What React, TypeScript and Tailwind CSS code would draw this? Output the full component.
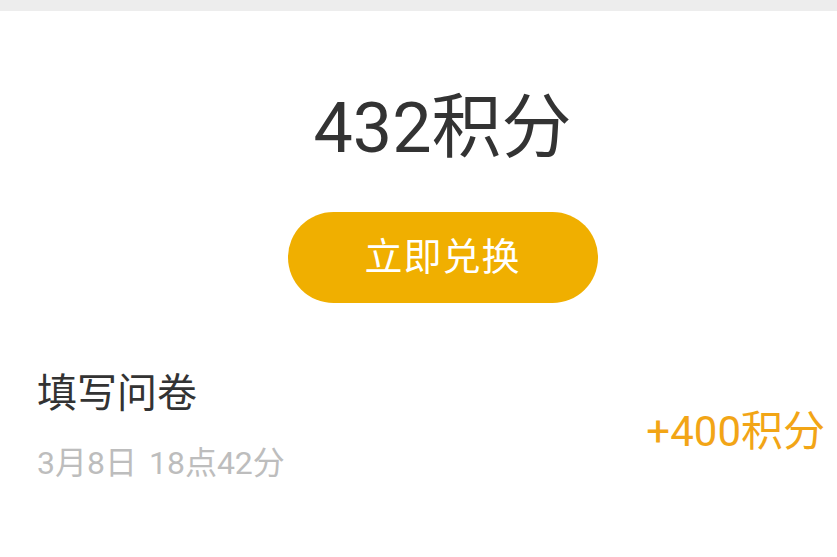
export default function App() {
  const font = { fontFamily: 'Roboto, "Noto Sans CJK SC", "Noto Sans", sans-serif' };
  return (
    <div className="w-[837px] h-[557px] bg-white overflow-hidden" style={font}>
      <div className="h-[11px] bg-[#ededed]" />
      <div className="flex flex-col items-center pl-[48px]">
        <div className="mt-[62px] text-[70px] leading-[110px] text-[#333333]">432积分</div>
        <button className="mt-[29px] w-[310px] h-[91px] rounded-full bg-[#f0af00] text-white text-[38px] tracking-[1px]">
          立即兑换
        </button>
      </div>
      <div className="mt-[63px] pl-[37px] pr-[12px] flex items-center justify-between">
        <div className="flex flex-col">
          <div className="text-[40px] leading-[56px] text-[#333333]">填写问卷</div>
          <div className="mt-[20px] text-[32px] leading-[42px] text-[#bdbdbd] [word-spacing:4px]">3月8日 18点42分</div>
        </div>
        <div className="pt-[14px] text-[42px] leading-[50px] text-[#f2a516]">+400积分</div>
      </div>
    </div>
  );
}
